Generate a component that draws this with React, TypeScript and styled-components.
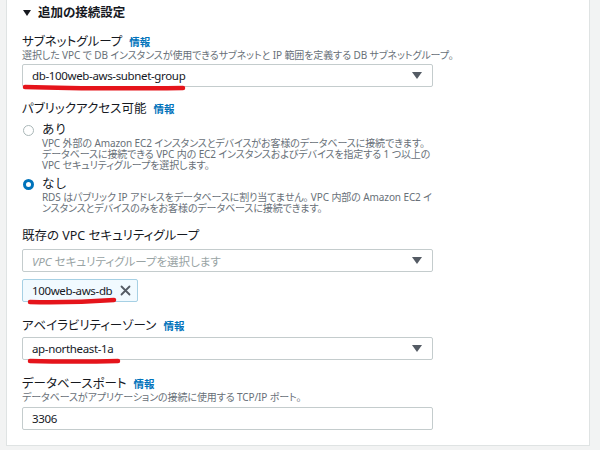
import { ReactNode } from 'react';
import styled, { createGlobalStyle } from 'styled-components';

const GlobalStyle = createGlobalStyle`
  html, body {
    margin: 0;
    padding: 0;
    background: #f2f3f3;
  }
  body {
    font-family: "Noto Sans", "Noto Sans CJK JP", sans-serif;
    color: #16191f;
    -webkit-font-smoothing: antialiased;
  }
`;

const Page = styled.div`
  width: 600px;
  height: 450px;
  padding-left: 6px;
  box-sizing: border-box;
  background: #f2f3f3;
  overflow: hidden;
`;

const Card = styled.section`
  width: 584px;
  box-sizing: border-box;
  background: #fff;
  border: 1px solid #dfe3e3;
  border-top: none;
  padding: 3px 15px 15px;
`;

const SectionHeader = styled.h3`
  display: flex;
  align-items: center;
  gap: 7px;
  margin: 0;
  padding-left: 1px;
  font-size: 12.5px;
  line-height: 20px;
  font-weight: 700;
  font-feature-settings: 'palt';
  color: #16191f;
`;

const HeaderCaret = styled.span`
  width: 0;
  height: 0;
  border-left: 4px solid transparent;
  border-right: 4px solid transparent;
  border-top: 6px solid #16191f;
`;

const Field = styled.div<{ $gap: number }>`
  margin-top: ${({ $gap }) => $gap}px;
`;

const Label = styled.div`
  height: 15px;
  font-size: 12.5px;
  line-height: 15px;
  font-feature-settings: 'palt';
  color: #16191f;
`;

const Info = styled.a`
  margin-left: 7px;
  font-size: 10.5px;
  line-height: 15px;
  font-weight: 700;
  color: #0073bb;
  text-decoration: none;
`;

const Description = styled.div`
  height: 12px;
  font-size: 10px;
  line-height: 12px;
  letter-spacing: -0.1px;
  font-feature-settings: 'palt';
  color: #687078;
  white-space: nowrap;
`;

const ControlWrap = styled.div<{ $gap: number }>`
  position: relative;
  margin-top: ${({ $gap }) => $gap}px;
`;

const Box = styled.div`
  width: 411px;
  height: 23px;
  box-sizing: border-box;
  border: 1px solid #c4cccd;
  border-radius: 2px;
  display: flex;
  align-items: center;
  justify-content: space-between;
  padding: 0 10px 0 9px;
  font-size: 11.5px;
  letter-spacing: -0.35px;
  color: #16191f;
  background: #fff;
`;

const Placeholder = styled.span`
  color: #98a3a4;
  letter-spacing: 0;
  font-feature-settings: 'palt';
  em {
    font-style: italic;
  }
`;

const SelectCaret = styled.span`
  width: 0;
  height: 0;
  border-left: 5px solid transparent;
  border-right: 5px solid transparent;
  border-top: 7px solid #545b64;
`;

const Token = styled.div`
  display: flex;
  width: fit-content;
  align-items: center;
  gap: 8px;
  height: 23px;
  box-sizing: border-box;
  padding: 0 6px 0 9px;
  background: #f1faff;
  border: 1px solid #a6d0e4;
  border-radius: 2px;
  font-size: 11.5px;
  letter-spacing: -0.35px;
  color: #16191f;
`;

const RadioRow = styled.div<{ $gap: number }>`
  display: flex;
  align-items: center;
  gap: 8px;
  height: 16px;
  margin-top: ${({ $gap }) => $gap}px;
  padding-left: 1px;
  font-size: 12.5px;
  line-height: 16px;
`;

const RadioDot = styled.span<{ $checked: boolean }>`
  width: 11px;
  height: 11px;
  box-sizing: border-box;
  border-radius: 50%;
  background: #fff;
  border: ${({ $checked }) => ($checked ? '3.5px solid #0073bb' : '1.5px solid #aab7b8')};
`;

const RadioDesc = styled.div`
  padding-left: 20px;
  font-size: 10px;
  line-height: 11px;
  letter-spacing: -0.1px;
  font-feature-settings: 'palt';
  color: #687078;
  white-space: nowrap;
`;

const Mark = styled.svg`
  position: absolute;
  pointer-events: none;
  overflow: visible;
`;

const RedMark = ({ left, top, width, d }: { left: number; top: number; width: number; d: string }) => (
  <Mark style={{ left, top }} width={width} height={6}>
    <path d={d} fill="none" stroke="#e5141b" strokeWidth={4.5} strokeLinecap="round" />
  </Mark>
);

const CloseIcon = () => (
  <svg width="11" height="11" viewBox="0 0 11 11">
    <path d="M1.5 1.5 L9.5 9.5 M9.5 1.5 L1.5 9.5" stroke="#545b64" strokeWidth="1.8" strokeLinecap="round" />
  </svg>
);

const InfoLink = () => <Info href="#">情報</Info>;

const Select = ({ children }: { children: ReactNode }) => (
  <Box>
    <span>{children}</span>
    <SelectCaret />
  </Box>
);

export default function App() {
  return (
    <>
      <GlobalStyle />
      <Page>
        <Card>
          <SectionHeader>
            <HeaderCaret />
            追加の接続設定
          </SectionHeader>

          <Field $gap={11}>
            <Label>
              サブネットグループ
              <InfoLink />
            </Label>
            <Description>
              選択した VPC で DB インスタンスが使用できるサブネットと IP 範囲を定義する DB サブネットグループ。
            </Description>
            <ControlWrap $gap={3}>
              <Select>db-100web-aws-subnet-group</Select>
              <RedMark left={3} top={21} width={160} d="M0 2 Q60 4 158 3" />
            </ControlWrap>
          </Field>

          <Field $gap={14}>
            <Label>
              パブリックアクセス可能
              <InfoLink />
            </Label>
            <RadioRow $gap={6}>
              <RadioDot $checked={false} />
              あり
            </RadioRow>
            <RadioDesc>
              VPC 外部の Amazon EC2 インスタンスとデバイスがお客様のデータベースに接続できます。
              <br />
              データベースに接続できる VPC 内の EC2 インスタンスおよびデバイスを指定する 1 つ以上の
              <br />
              VPC セキュリティグループを選択します。
            </RadioDesc>
            <RadioRow $gap={5}>
              <RadioDot $checked />
              なし
            </RadioRow>
            <RadioDesc>
              RDS はパブリック IP アドレスをデータベースに割り当てません。 VPC 内部の Amazon EC2 イ
              <br />
              ンスタンスとデバイスのみをお客様のデータベースに接続できます。
            </RadioDesc>
          </Field>

          <Field $gap={14}>
            <Label>既存の VPC セキュリティグループ</Label>
            <ControlWrap $gap={6}>
              <Select>
                <Placeholder>
                  <em>VPC</em> セキュリティグループを選択します
                </Placeholder>
              </Select>
            </ControlWrap>
            <ControlWrap $gap={7}>
              <Token>
                100web-aws-db
                <CloseIcon />
              </Token>
              <RedMark left={8} top={20} width={86} d="M0 3 Q40 4 84 1" />
            </ControlWrap>
          </Field>

          <Field $gap={16}>
            <Label>
              アベイラビリティーゾーン
              <InfoLink />
            </Label>
            <ControlWrap $gap={4}>
              <Select>ap-northeast-1a</Select>
              <RedMark left={8} top={22} width={90} d="M0 2 Q45 3 88 2" />
            </ControlWrap>
          </Field>

          <Field $gap={16}>
            <Label>
              データベースポート
              <InfoLink />
            </Label>
            <Description>データベースがアプリケーションの接続に使用する TCP/IP ポート。</Description>
            <ControlWrap $gap={4}>
              <Box>3306</Box>
            </ControlWrap>
          </Field>
        </Card>
      </Page>
    </>
  );
}
